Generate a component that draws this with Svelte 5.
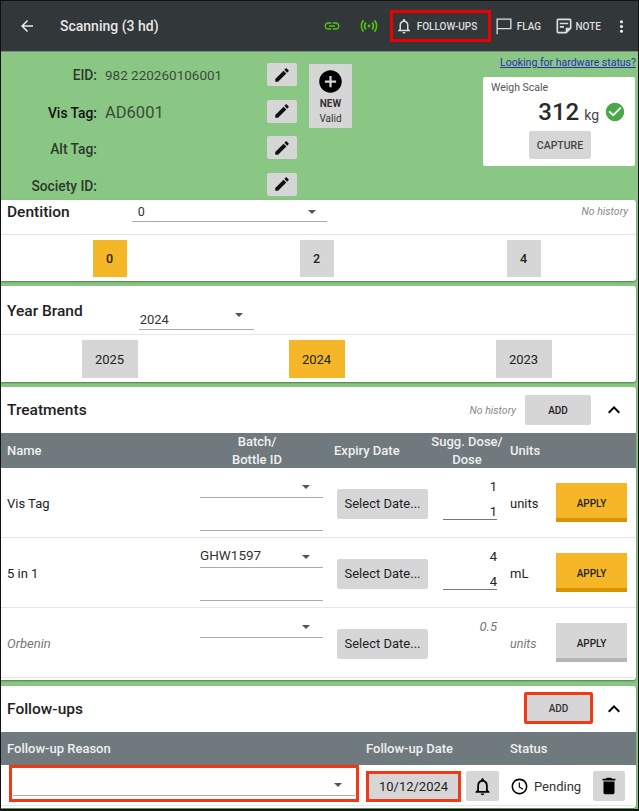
<script>
  const icons = {
    back: 'M20 11H7.83l5.59-5.59L12 4l-8 8 8 8 1.41-1.41L7.83 13H20v-2z',
    link: 'M3.9 12c0-1.71 1.39-3.1 3.1-3.1h4V7H7c-2.76 0-5 2.24-5 5s2.24 5 5 5h4v-1.9H7c-1.71 0-3.1-1.39-3.1-3.1zM8 13h8v-2H8v2zm9-6h-4v1.9h4c1.71 0 3.1 1.39 3.1 3.1s-1.39 3.1-3.1 3.1h-4V17h4c2.76 0 5-2.24 5-5s-2.24-5-5-5z',
    bell: 'M12 22c1.1 0 2-.9 2-2h-4c0 1.1.9 2 2 2zm6-6v-5c0-3.07-1.63-5.64-4.5-6.32V4c0-.83-.67-1.5-1.5-1.5s-1.5.67-1.5 1.5v.68C7.64 5.36 6 7.92 6 11v5l-2 2v1h16v-1l-2-2zm-2 1H8v-6c0-2.48 1.51-4.5 4-4.5s4 2.02 4 4.5v6z',
    flag: 'M3 3h18v13H4.6v6H3V3zm1.6 1.6v9.8h14.8V4.6H4.6z',
    note: 'M19 5v9h-5v5H5V5h14m0-2H5c-1.1 0-2 .9-2 2v14c0 1.1.9 2 2 2h10l6-6V5c0-1.1-.9-2-2-2zm-7 11H7v-2h5v2zm5-4H7V8h10v2z',
    more: 'M12 8c1.1 0 2-.9 2-2s-.9-2-2-2-2 .9-2 2 .9 2 2 2zm0 2c-1.1 0-2 .9-2 2s.9 2 2 2 2-.9 2-2-.9-2-2-2zm0 6c-1.1 0-2 .9-2 2s.9 2 2 2 2-.9 2-2-.9-2-2-2z',
    edit: 'M3 17.25V21h3.75L17.81 9.94l-3.75-3.75L3 17.25zM20.71 7.04c.39-.39.39-1.02 0-1.41l-2.34-2.34c-.39-.39-1.02-.39-1.41 0l-1.83 1.83 3.75 3.75 1.83-1.83z',
    add: 'M12 2C6.48 2 2 6.48 2 12s4.48 10 10 10 10-4.48 10-10S17.52 2 12 2zm5 11h-4v4h-2v-4H7v-2h4V7h2v4h4v2z',
    check: 'M12 2C6.48 2 2 6.48 2 12s4.48 10 10 10 10-4.48 10-10S17.52 2 12 2zm-2 15l-5-5 1.41-1.41L10 14.17l7.59-7.59L19 8l-9 9z',
    less: 'M12 8l-6 6 1.41 1.41L12 10.83l4.59 4.58L18 14z',
    clock: 'M11.99 2C6.47 2 2 6.48 2 12s4.47 10 9.99 10C17.52 22 22 17.52 22 12S17.52 2 11.99 2zM12 20c-4.42 0-8-3.58-8-8s3.58-8 8-8 8 3.58 8 8-3.58 8-8 8zm.5-13H11v6l5.25 3.15.75-1.23-4.5-2.67z',
    trash: 'M6 19c0 1.1.9 2 2 2h8c1.1 0 2-.9 2-2V7H6v12zM19 4h-3.5l-1-1h-5l-1 1H5v2h14V4z'
  };

  const fields = [
    { label: 'EID:', value: '982 220260106001' },
    { label: 'Vis Tag:', value: 'AD6001', strong: true },
    { label: 'Alt Tag:', value: '' },
    { label: 'Society ID:', value: '' }
  ];

  const dentition = [
    { text: '0', active: true },
    { text: '2' },
    { text: '4' }
  ];

  const years = [
    { text: '2025' },
    { text: '2024', active: true },
    { text: '2023' }
  ];

  const treatments = [
    { name: 'Vis Tag', batch: '', sugg: '1', dose: '1', units: 'units', ready: true },
    { name: '5 in 1', batch: 'GHW1597', sugg: '4', dose: '4', units: 'mL', ready: true },
    { name: 'Orbenin', batch: '', sugg: '0.5', dose: '', units: 'units', optional: true }
  ];
</script>

{#snippet icon(name, size, fill = 'currentColor')}
  <svg viewBox="0 0 24 24" width={size} height={size} {fill} aria-hidden="true"><path d={icons[name]} /></svg>
{/snippet}

{#snippet caret()}
  <span class="caret"></span>
{/snippet}

<div class="page">
  <header class="topbar">
    <button class="back">{@render icon('back', 18)}</button>
    <h1>Scanning (3 hd)</h1>
    <div class="actions">
      <span class="status-icon link">{@render icon('link', 18, '#4fc40f')}</span>
      <span class="status-icon antenna">
        <svg viewBox="0 0 20 20" width="18" height="18" fill="none" stroke="#4fc40f" stroke-width="2">
          <circle cx="10" cy="10" r="1.6" fill="#4fc40f" stroke="none" />
          <path d="M6.6 6.2a6 6 0 0 0 0 7.6M13.4 6.2a6 6 0 0 1 0 7.6M3.8 3.8a10 10 0 0 0 0 12.4M16.2 3.8a10 10 0 0 1 0 12.4" />
        </svg>
      </span>
      <button class="bar-btn followups">{@render icon('bell', 18)}<span>FOLLOW-UPS</span></button>
      <button class="bar-btn flag">{@render icon('flag', 20)}<span>FLAG</span></button>
      <button class="bar-btn note">{@render icon('note', 20)}<span>NOTE</span></button>
      <button class="more">{@render icon('more', 19)}</button>
    </div>
  </header>

  <section class="animal">
    <div class="fields">
      {#each fields as f}
        <div class="field">
          <span class="label" class:strong={f.strong}>{f.label}</span>
          <span class="value" class:big={f.strong}>{f.value}</span>
          <button class="edit">{@render icon('edit', 18, '#111')}</button>
        </div>
      {/each}
    </div>
    <button class="new">
      {@render icon('add', 27, '#000')}
      <b>NEW</b>
      <span>Valid</span>
    </button>
    <div class="scale-col">
      <span class="hw-link">Looking for hardware status?</span>
      <div class="scale">
        <div class="scale-title">Weigh Scale</div>
        <div class="reading">
          <strong>312</strong><span class="kg">kg</span>
          <span class="ok">{@render icon('check', 22, '#4aa84b')}</span>
        </div>
        <button class="capture">CAPTURE</button>
      </div>
    </div>
  </section>

  <section class="card dentition">
    <div class="pick-head">
      <h2>Dentition</h2>
      <div class="select dent-select"><span>0</span>{@render caret()}</div>
      <em class="history">No history</em>
    </div>
    <div class="choices">
      {#each dentition as c}
        <div class="choice-cell"><button class="choice narrow" class:active={c.active}>{c.text}</button></div>
      {/each}
    </div>
  </section>

  <section class="card year">
    <div class="pick-head year-head">
      <h2>Year Brand</h2>
      <div class="select year-select"><span>2024</span>{@render caret()}</div>
    </div>
    <div class="choices">
      {#each years as c}
        <div class="choice-cell"><button class="choice" class:active={c.active}>{c.text}</button></div>
      {/each}
    </div>
  </section>

  <section class="card treatments">
    <div class="card-head">
      <h2>Treatments</h2>
      <em class="history">No history</em>
      <button class="add">ADD</button>
      <span class="chevron">{@render icon('less', 24, '#000')}</span>
    </div>
    <div class="thead tcols">
      <span>Name</span>
      <span class="center batch-h">Batch/<br />Bottle ID</span>
      <span class="expiry-h">Expiry Date</span>
      <span class="center dose-h">Sugg. Dose/<br />Dose</span>
      <span>Units</span>
    </div>
    {#each treatments as t}
      <div class="trow tcols" class:optional={t.optional}>
        <span class="name">{t.name}</span>
        <div class="batch">
          <div class="select"><span>{t.batch}</span>{@render caret()}</div>
          {#if !t.optional}<div class="batch-input"></div>{/if}
        </div>
        <button class="date">Select Date...</button>
        <div class="dose">
          <span class="sugg">{t.sugg}</span>
          {#if !t.optional}<span class="dose-input">{t.dose}</span>{/if}
        </div>
        <span class="units">{t.units}</span>
        <button class="apply" class:ready={t.ready}>APPLY</button>
      </div>
    {/each}
  </section>

  <section class="card followups-card">
    <div class="card-head fu-head">
      <h2>Follow-ups</h2>
      <button class="add marked">ADD</button>
      <span class="chevron">{@render icon('less', 24, '#000')}</span>
    </div>
    <div class="thead fcols">
      <span>Follow-up Reason</span>
      <span>Follow-up Date</span>
      <span>Status</span>
    </div>
    <div class="frow fcols">
      <div class="reason"><div class="select">{@render caret()}</div></div>
      <div class="fu-date">
        <button class="date-value">10/12/2024</button>
        <button class="icon-btn">{@render icon('bell', 21, '#000')}</button>
      </div>
      <div class="fu-status">
        {@render icon('clock', 19, '#000')}
        <span>Pending</span>
        <button class="icon-btn trash">{@render icon('trash', 22, '#000')}</button>
      </div>
    </div>
  </section>
</div>

<style>
  :global(body) {
    margin: 0;
    background: #000;
  }

  .page {
    box-sizing: border-box;
    width: 639px;
    height: 811px;
    overflow: hidden;
    border: 1px solid #111;
    border-width: 1px 1px 2px 1px;
    background: #8bc784;
    font-family: Roboto, "Liberation Sans", sans-serif;
    color: #222;
  }

  button {
    border: none;
    padding: 0;
    font-family: inherit;
    color: inherit;
    cursor: pointer;
  }

  svg {
    display: block;
    flex: none;
  }

  h1, h2 {
    margin: 0;
  }

  /* top bar */
  .topbar {
    display: flex;
    align-items: center;
    height: 50px;
    background: #32373a;
    border-bottom: 1px solid #7b8a7b;
    color: #e6e6e6;
  }

  .back {
    background: none;
    margin-left: 17px;
    width: 18px;
    color: #eee;
  }

  h1 {
    margin-left: 24px;
    font-size: 14px;
    font-weight: 500;
  }

  .actions {
    display: flex;
    align-items: center;
    margin-left: auto;
    height: 100%;
  }

  .status-icon {
    display: flex;
  }

  .antenna {
    margin-left: 19px;
  }

  .bar-btn {
    display: flex;
    align-items: center;
    background: none;
    color: #ddd;
    font-size: 10px;
    font-weight: 500;
  }

  .followups {
    box-sizing: border-box;
    width: 101px;
    height: 32px;
    margin-left: 12px;
    padding-left: 2px;
    gap: 4px;
    border: 3px solid #ee0000;
  }

  .flag {
    margin-left: 3px;
    gap: 3px;
  }

  .note {
    margin-left: 12.5px;
    gap: 2px;
  }

  .more {
    background: none;
    color: #eee;
    margin: 0 7px 0 11px;
  }

  /* animal id block */
  .animal {
    display: flex;
    height: 148px;
    box-sizing: border-box;
    padding-top: 11px;
  }

  .fields {
    display: flex;
    flex-direction: column;
    gap: 13.5px;
    width: 296px;
  }

  .field {
    display: flex;
    align-items: center;
    height: 23px;
    color: #333;
  }

  .field:nth-child(2) .label,
  .field:nth-child(2) .value,
  .field:nth-child(3) .label,
  .field:nth-child(4) .label {
    padding-top: 3px;
  }

  .label {
    width: 96px;
    text-align: right;
    font-size: 13.8px;
    font-weight: 500;
    color: #2c3a2c;
  }

  .label.strong {
    color: #111;
  }

  .value {
    flex: 1;
    margin-left: 8px;
    font-size: 13.5px;
    color: #3c4a3c;
  }

  .value.big {
    font-size: 16.5px;
  }

  .edit {
    display: flex;
    align-items: center;
    justify-content: center;
    width: 30px;
    height: 23px;
    background: #d6d6d6;
    border-radius: 2px;
  }

  .new {
    display: flex;
    flex-direction: column;
    align-items: center;
    box-sizing: border-box;
    width: 43px;
    height: 64px;
    margin: 1px 0 0 12px;
    padding-top: 4px;
    background: #d6d6d6;
    font-size: 10px;
    line-height: 15px;
    color: #333;
  }

  .new b {
    font-weight: 700;
    margin-top: 1px;
  }

  .scale-col {
    display: flex;
    flex-direction: column;
    align-items: flex-end;
    margin: -6px 2px 0 auto;
  }

  .hw-link {
    font-size: 10.5px;
    line-height: 12px;
    color: #2b2fb5;
    text-decoration: underline;
  }

  .scale {
    box-sizing: border-box;
    width: 152px;
    height: 89px;
    margin: 8px 1px 0 0;
    padding: 4px 8px 0;
    background: #fff;
    border-radius: 2px;
  }

  .scale-title {
    font-size: 10.5px;
    color: #555;
  }

  .reading {
    display: flex;
    align-items: center;
    justify-content: flex-end;
    height: 26px;
    margin-top: 5px;
    padding-right: 1px;
  }

  .reading strong {
    font-size: 24px;
    font-weight: 500;
    color: #2a2a2a;
  }

  .kg {
    margin: 6px 5px 0 5px;
    font-size: 14px;
    color: #444;
  }

  .capture {
    display: block;
    width: 62px;
    height: 28px;
    margin: 6px 0 0 38px;
    background: #d6d6d6;
    border-radius: 2px;
    font-size: 10.5px;
    font-weight: 500;
    color: #444;
  }

  /* cards */
  .card {
    margin-right: 2px;
    background: #fff;
    border-radius: 0 3px 3px 0;
    box-shadow: 0 1px 2px rgba(20, 70, 20, 0.55);
  }

  .card h2 {
    font-size: 15.5px;
    font-weight: 500;
    color: #222;
  }

  .dentition {
    height: 81px;
  }

  .year {
    height: 96px;
    margin-top: 5px;
  }

  .treatments {
    height: 293px;
    margin-top: 5px;
  }

  .followups-card {
    height: 122px;
    margin-top: 6px;
  }

  .pick-head {
    position: relative;
    display: flex;
    box-sizing: border-box;
    height: 35px;
    padding-left: 6px;
    border-bottom: 1px solid #e6e6e6;
  }

  .pick-head h2 {
    line-height: 24px;
  }

  .select {
    position: relative;
    display: flex;
    align-items: center;
    box-sizing: border-box;
    height: 19px;
    border-bottom: 1.5px solid #aaa;
    font-size: 12.5px;
    color: #333;
  }

  .caret {
    position: absolute;
    right: 11px;
    top: 7px;
    border: 4.5px solid transparent;
    border-top: 4.5px solid #555;
    border-bottom: none;
  }

  .dent-select {
    width: 195px;
    margin: 3px 0 0 62px;
    padding: 0 0 2px 6px;
  }

  .year-head {
    height: 49px;
  }

  .year-head h2 {
    margin-top: 13px;
  }

  .year-select {
    width: 115px;
    height: 24px;
    margin: 20px 0 0 56px;
    padding: 3px 0 0 1px;
    font-size: 13px;
  }

  .history {
    margin-left: auto;
    margin-right: 8px;
    font-size: 10.5px;
    color: #888;
  }

  .pick-head .history {
    line-height: 24px;
  }

  .choices {
    display: grid;
    grid-template-columns: repeat(3, 207px);
    padding: 5px 0 0 5px;
  }

  .choice-cell {
    display: flex;
    justify-content: center;
  }

  .choice {
    width: 56px;
    height: 38px;
    background: #d6d6d6;
    font-size: 13px;
    color: #222;
  }

  .choice.narrow {
    width: 34px;
    height: 37px;
    font-weight: 500;
    font-size: 12.5px;
  }

  .choice.active {
    background: #f5b727;
  }

  .card-head {
    display: flex;
    align-items: center;
    box-sizing: border-box;
    height: 46px;
    padding-left: 6px;
  }

  .card-head .history {
    margin-right: 9px;
  }

  .add {
    width: 66px;
    height: 30px;
    background: #d6d6d6;
    border-radius: 2px;
    font-size: 10px;
    font-weight: 500;
    color: #222;
  }

  .chevron {
    margin: 0 10px 0 11px;
  }

  .fu-head .add {
    margin-left: auto;
  }

  .add.marked {
    box-sizing: border-box;
    width: 69px;
    height: 32px;
    margin-top: -2px;
    border: 3px solid #f03a16;
    color: #333;
  }

  .fu-head .chevron {
    margin-left: 9px;
  }

  /* table headers */
  .thead {
    box-sizing: border-box;
    background: #70797e;
    color: #eef0f0;
    font-size: 13px;
    font-weight: 500;
    line-height: 18px;
    align-items: center;
  }

  .center {
    text-align: center;
  }

  .tcols {
    display: grid;
    grid-template-columns: 193px 137px 106px 67px 46px 71px;
    padding-left: 6px;
  }

  .treatments .thead {
    height: 35px;
  }

  .batch-h {
    width: 114px;
  }

  .expiry-h {
    margin-left: -3px;
    white-space: nowrap;
  }

  .dose-h {
    width: 74px;
    margin-left: -13px;
    white-space: nowrap;
  }

  .trow {
    align-items: center;
    box-sizing: border-box;
    height: 70px;
    border-bottom: 1px solid #e6e6e6;
    font-size: 13px;
    color: #222;
  }

  .trow .name,
  .trow .units,
  .trow .date {
    margin-top: 2px;
  }

  .trow.optional .name,
  .trow.optional .units,
  .trow.optional .sugg {
    font-style: italic;
    color: #777;
  }

  .trow.optional .units {
    font-size: 12.5px;
  }

  .batch {
    display: flex;
    flex-direction: column;
    align-self: start;
    width: 123px;
    padding-top: 11px;
  }

  .batch-input {
    height: 32px;
    border-bottom: 1px solid #aaa;
  }

  .batch .select {
    height: 19px;
    padding-bottom: 6px;
    font-size: 13.5px;
  }

  .batch .caret {
    right: 13px;
    top: 6px;
  }

  .date {
    width: 91px;
    height: 30px;
    background: #d6d6d6;
    border-radius: 2px;
    font-size: 13px;
    color: #222;
  }

  .dose {
    display: flex;
    flex-direction: column;
    align-self: start;
    align-items: flex-end;
    width: 54px;
    padding-top: 11px;
    font-size: 13px;
  }

  .sugg {
    line-height: 16px;
  }

  .dose-input {
    box-sizing: border-box;
    width: 100%;
    height: 25px;
    padding-top: 9px;
    line-height: 16px;
    text-align: right;
    border-bottom: 1px solid #777;
  }

  .apply {
    box-sizing: border-box;
    height: 39px;
    padding-top: 6px;
    background: #d6d6d6;
    border-bottom: 4px solid #b5b5b5;
    font-size: 10px;
    font-weight: 500;
    color: #222;
  }

  .apply.ready {
    background: #f5b727;
    border-bottom-color: #d99500;
  }

  /* follow-ups table */
  .fcols {
    display: grid;
    grid-template-columns: 359px 144px 1fr;
    padding-left: 6px;
  }

  .followups-card .thead {
    height: 33px;
  }

  .frow {
    align-items: start;
    height: 40px;
    border-bottom: 1px solid #e6e6e6;
  }

  .reason {
    box-sizing: border-box;
    width: 350px;
    height: 37px;
    margin-left: 2px;
    padding: 0 1px;
    border: 3px solid #f03a16;
  }

  .reason .select {
    height: 28px;
  }

  .reason .caret {
    right: 13px;
    top: 15px;
  }

  .fu-date {
    display: flex;
    gap: 5px;
    margin-top: 6px;
  }

  .date-value {
    box-sizing: border-box;
    width: 95px;
    height: 31px;
    background: #d6d6d6;
    border: 3px solid #f03a16;
    font-size: 13px;
    color: #222;
  }

  .icon-btn {
    display: flex;
    align-items: center;
    justify-content: center;
    width: 33px;
    height: 30px;
    background: #d6d6d6;
    border-radius: 2px;
  }

  .fu-status {
    display: flex;
    align-items: center;
    gap: 5px;
    height: 30px;
    margin-top: 6px;
    font-size: 13px;
    color: #333;
  }

  .trash {
    width: 32px;
    margin-left: 7px;
  }
</style>
